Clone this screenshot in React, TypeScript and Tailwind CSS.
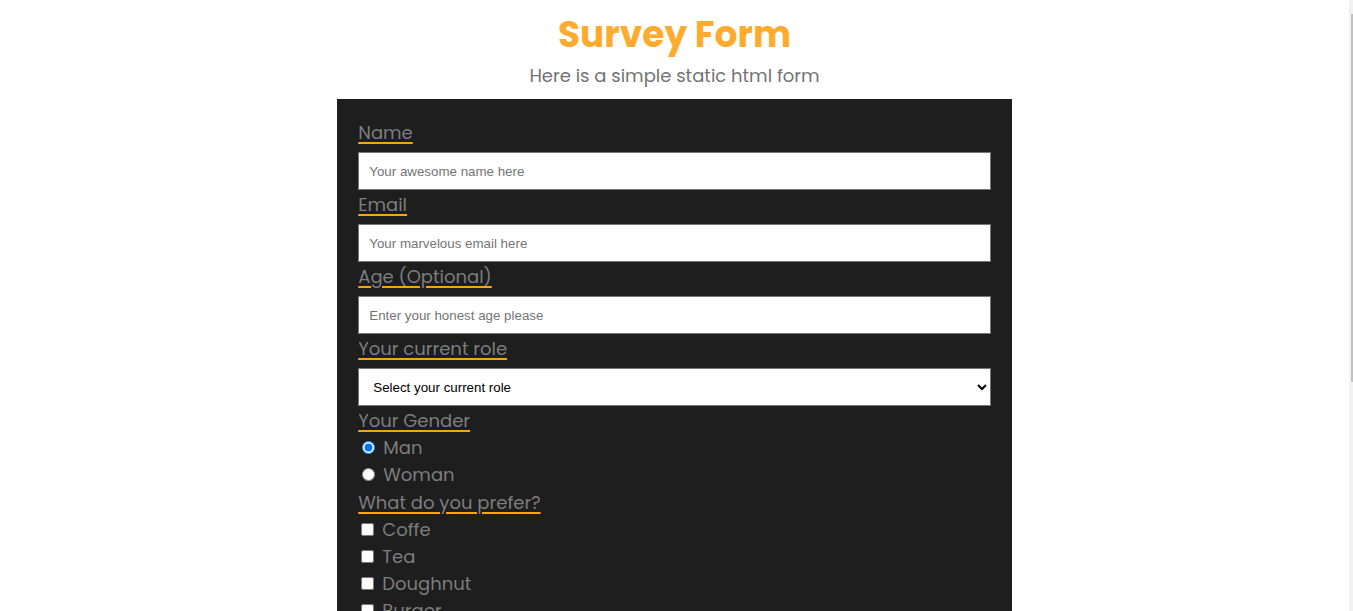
import React from 'react';

const sans = "font-['Poppins','Open_Sans',sans-serif]";

function FieldLabel({ children, htmlFor }: { children: React.ReactNode; htmlFor?: string }) {
    return (
        <div className="pt-[1px] text-[18px] leading-[27px]">
            <label
                htmlFor={htmlFor}
                className="text-[#7d7d7d] underline decoration-[#ffa500] decoration-[1.5px] underline-offset-[3px]"
            >
                {children}
            </label>
        </div>
    );
}

function TextField({ id, placeholder, type = 'text' }: { id: string; placeholder: string; type?: string }) {
    return (
        <input
            id={id}
            type={type}
            placeholder={placeholder}
            className="mt-[6px] block w-full h-[38px] bg-white border border-[#767676] px-[10px] text-[13.33px] text-black placeholder:text-[#757575] font-['Liberation_Sans',Arial,sans-serif] outline-none"
        />
    );
}

function Choice({ type, name, label, checked }: { type: 'radio' | 'checkbox'; name: string; label: string; checked?: boolean }) {
    return (
        <label className="flex items-center h-[27px] text-[18px] leading-[27px] text-[#7d7d7d]">
            <input
                type={type}
                name={name}
                defaultChecked={checked}
                className={type === 'radio' ? 'ml-[4px] mr-[8px] w-[13px] h-[13px]' : 'ml-[3px] mr-[8px] w-[13px] h-[13px]'}
            />
            {label}
        </label>
    );
}

export default function App() {
    return (
        <div className={`h-[611px] overflow-hidden flex bg-white ${sans}`}>
            <div className="flex-1 min-w-0">
                <header className="text-center pt-[12px]">
                    <h1 className="text-[36px] leading-[46px] font-bold text-[#ffab2e]">Survey Form</h1>
                    <p className="mt-[4px] text-[18px] leading-[27px] text-[#737373]">Here is a simple static html form</p>
                </header>

                {/* the form panel */}
                <form className="mt-[10px] w-1/2 mx-auto bg-[#1e1e1e] px-[21px] pt-[19px] pb-10">
                    <FieldLabel htmlFor="name">Name</FieldLabel>
                    <TextField id="name" placeholder="Your awesome name here" />

                    <FieldLabel htmlFor="email">Email</FieldLabel>
                    <TextField id="email" type="email" placeholder="Your marvelous email here" />

                    <FieldLabel htmlFor="age">Age (Optional)</FieldLabel>
                    <TextField id="age" type="number" placeholder="Enter your honest age please" />

                    <FieldLabel htmlFor="role">Your current role</FieldLabel>
                    <select
                        id="role"
                        defaultValue=""
                        className="mt-[6px] block w-full h-[38px] bg-white border border-[#767676] px-[10px] text-[13.33px] text-black font-['Liberation_Sans',Arial,sans-serif]"
                    >
                        <option value="" disabled>Select your current role</option>
                        <option>Student</option>
                        <option>Full time job</option>
                        <option>Prefer not to say</option>
                    </select>

                    <FieldLabel>Your Gender</FieldLabel>
                    <Choice type="radio" name="gender" label="Man" checked />
                    <Choice type="radio" name="gender" label="Woman" />

                    <FieldLabel>What do you prefer?</FieldLabel>
                    <Choice type="checkbox" name="food" label="Coffe" />
                    <Choice type="checkbox" name="food" label="Tea" />
                    <Choice type="checkbox" name="food" label="Doughnut" />
                    <Choice type="checkbox" name="food" label="Burger" />
                </form>
            </div>

            {/* page scrollbar */}
            <div className="w-[4px] bg-[#f1f1f1]">
                <div className="mt-[14px] ml-[2px] h-[368px] bg-[#c1c1c1]" />
            </div>
        </div>
    );
}
